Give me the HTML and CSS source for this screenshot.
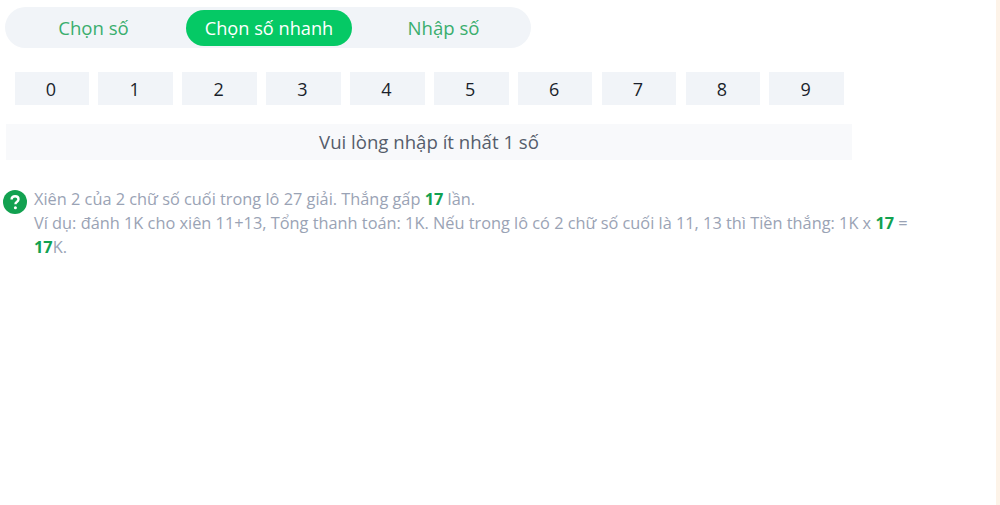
FILE: index.html
```html
<!DOCTYPE html>
<html lang="vi">
<head>
<meta charset="utf-8">
<title>Chọn số nhanh</title>
<link rel="stylesheet" href="styles.css">
</head>
<body>
<div class="page">
  <main class="content">
    <nav class="tabs">
      <a class="tab">Chọn số</a>
      <a class="tab active">Chọn số nhanh</a>
      <a class="tab">Nhập số</a>
    </nav>
    <div class="digits">
      <button class="digit">0</button>
      <button class="digit">1</button>
      <button class="digit">2</button>
      <button class="digit">3</button>
      <button class="digit">4</button>
      <button class="digit">5</button>
      <button class="digit">6</button>
      <button class="digit">7</button>
      <button class="digit">8</button>
      <button class="digit">9</button>
    </div>
    <div class="message">Vui lòng nhập ít nhất 1 số</div>
    <section class="help">
      <svg class="help-icon" viewBox="0 0 24 24" aria-hidden="true">
        <circle cx="12" cy="12" r="12" fill="#12a150"/>
        <path d="M8.6 9.6c0-2.1 1.5-3.4 3.5-3.4s3.4 1.2 3.4 3c0 1.3-.7 2-1.7 2.7-.9.6-1.3 1-1.3 2v.3" fill="none" stroke="#fff" stroke-width="2.4"/>
        <circle cx="12.4" cy="17.8" r="1.5" fill="#fff"/>
      </svg>
      <p class="help-text">Xiên 2 của 2 chữ số cuối trong lô 27 giải. Thắng gấp <b>17</b> lần.<br>Ví dụ: đánh 1K cho xiên 11+13, Tổng thanh toán: 1K. Nếu trong lô có 2 chữ số cuối là 11, 13 thì Tiền thắng: 1K x <b>17</b> = <b>17</b>K.</p>
    </section>
  </main>
  <div class="edge"></div>
</div>
</body>
</html>
```
FILE: styles.css
```css
* { box-sizing: border-box; }
html, body { margin: 0; height: 100%; }
body { background: #fff; font-family: "Open Sans", "Noto Sans", sans-serif; overflow: hidden; }
.page { display: flex; height: 505px; }
.content { flex: 1; padding: 7px 84px 0 0; min-width: 0; }
.edge { width: 4px; background: #fdf3e8; }

.tabs {
  display: flex; align-items: center; gap: 4px; width: 526px; height: 41px; margin-left: 5px;
  background: #f1f4f8; border-radius: 21px;
}
.tab {
  height: 36px; line-height: 36px; text-align: center; font-size: 18.6px; color: #3aae6e; border-radius: 18px;
}
.tab:nth-child(1) { width: 177px; }
.tab:nth-child(2) { width: 166px; }
.tab:nth-child(3) { width: 175px; }
.tab.active { background: #05c965; color: #fff; font-size: 18.2px; }

.digits { display: flex; gap: 9.2px; margin: 24px 0 0 14.5px; }
.digit {
  width: 74.7px; height: 33px; padding: 0 2px 0 0; border: 0; background: #f1f4f8;
  font: 400 18px "Open Sans", sans-serif; color: #1a1f2b;
}

.message {
  width: 846px; height: 36px; margin: 19px 0 0 6px; background: #f8f9fb;
  line-height: 35px; text-align: center; font-size: 18.6px; color: #555d6b;
}

.help { position: relative; margin-top: 28.4px; padding-left: 34px; }
.help-icon { position: absolute; left: 3px; top: 1.6px; width: 24px; height: 24px; }
.help-text { margin: 0; width: 882px; font-size: 16.34px; line-height: 23.8px; color: #9aa3b5; }
.help-text b { font-weight: 700; color: #12a150; }
```
